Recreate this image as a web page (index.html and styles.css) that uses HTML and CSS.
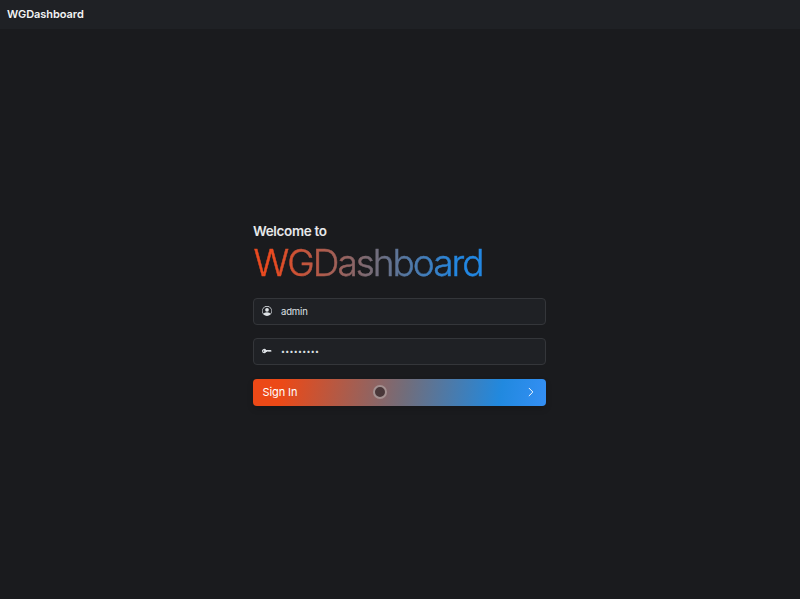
FILE: index.html
```html
<!DOCTYPE html>
<html lang="en">
<head>
<meta charset="utf-8">
<title>WGDashboard</title>
<link rel="stylesheet" href="styles.css">
</head>
<body>
<nav class="navbar"><span class="brand">WGDashboard</span></nav>
<main class="signin">
  <form class="form">
    <h4 class="welcome">Welcome to</h4>
    <h1 class="title">WGDashboard</h1>
    <div class="field">
      <svg class="icon" viewBox="0 0 16 16" fill="currentColor"><path d="M11 6a3 3 0 1 1-6 0 3 3 0 0 1 6 0"/><path fill-rule="evenodd" d="M0 8a8 8 0 1 1 16 0A8 8 0 0 1 0 8m8-7a7 7 0 0 0-5.468 11.370C3.242 11.226 4.805 10 8 10s4.757 1.225 5.468 2.370A7 7 0 0 0 8 1"/></svg>
      <span class="value">admin</span>
    </div>
    <div class="field">
      <svg class="icon" viewBox="0 0 16 16" fill="currentColor"><path fill-rule="evenodd" d="M3.500 11.500a3.500 3.500 0 1 1 3.163-5H14L15.500 8 14 9.500l-1-1-1 1-1-1-1 1-1-1-1 1H6.663a3.500 3.500 0 0 1-3.163 2M2.500 9a1 1 0 1 0 0-2 1 1 0 0 0 0 2"/></svg>
      <span class="value dots">•••••••••</span>
    </div>
    <button class="submit" type="button">
      <span class="label">Sign In</span>
      <svg class="chevron" viewBox="0 0 16 16" fill="none" stroke="currentColor" stroke-width="1.5" stroke-linecap="round" stroke-linejoin="round"><path d="M5 2l6 6-6 6"/></svg>
      <i class="pointer"></i>
    </button>
  </form>
</main>
</body>
</html>
```
FILE: styles.css
```css
* { box-sizing: border-box; }
body {
  margin: 0;
  height: 599px;
  display: flex;
  flex-direction: column;
  background: #1a1b1e;
  color: #f3f4f5;
  font-family: Inter, "Liberation Sans", sans-serif;
  overflow: hidden;
}
.navbar {
  height: 29px;
  padding: 0 0 1px 7px;
  display: flex;
  align-items: center;
  background: #1f2125;
}
.brand { font-size: 11px; font-weight: 600; letter-spacing: -0.05px; }
.signin {
  flex: 1;
  display: flex;
  justify-content: center;
  padding: 193px 1px 0 0;
}
.form { width: 293px; margin-right: 1px; }
.welcome {
  margin: 0;
  padding-left: 0.5px;
  font-size: 13.5px;
  line-height: 18px;
  font-weight: 600;
  letter-spacing: -0.35px;
  color: #e6e8ea;
}
.title {
  margin: 0 0 13px;
  width: max-content;
  font-size: 37px;
  line-height: 45px;
  font-weight: 300;
  letter-spacing: -2px;
  padding: 0 3px 0 1px;
  -webkit-text-stroke: 0.5px transparent;
  background: linear-gradient(90deg, #e94a20 8%, #756d79 52%, #2287e2 88%);
  -webkit-background-clip: text;
  background-clip: text;
  color: transparent;
}
.field {
  height: 27px;
  margin-bottom: 13px;
  padding: 0 0 1px 8.5px;
  display: flex;
  align-items: center;
  gap: 9px;
  border: 1px solid #34363a;
  border-radius: 4px;
  background: #1f2125;
}
.field + .field { margin-bottom: 14px; }
.icon { width: 10px; height: 10px; color: #dee2e6; }
.value { font-size: 9.5px; color: #dee2e6; letter-spacing: -0.15px; }
.dots { font-size: 7px; letter-spacing: 0.3px; }
.submit {
  position: relative;
  width: 100%;
  height: 27px;
  padding: 0 10px 1px;
  display: flex;
  align-items: center;
  justify-content: space-between;
  border: 0;
  border-radius: 4px;
  background: linear-gradient(100deg, #ec4917 10%, #716d7b 52%, #2189df 84%, #348ff4 100%);
  box-shadow: 0 3px 6px rgba(0, 0, 0, .15);
  color: #fff;
  font: 400 11px Inter, sans-serif;
}
.label { letter-spacing: -0.1px; }
.chevron { width: 10px; height: 10px; }
.pointer {
  position: absolute;
  left: 120px;
  top: 6px;
  width: 14px;
  height: 14px;
  border: 2px solid #a39090;
  border-radius: 50%;
  background: #493739;
}
```
